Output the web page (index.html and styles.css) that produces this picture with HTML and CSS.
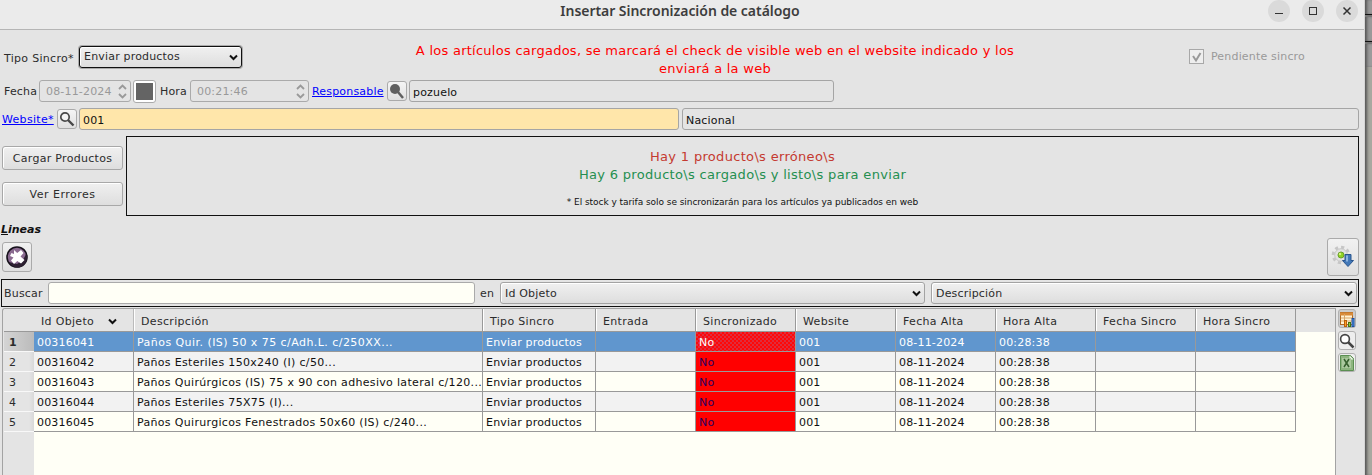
FILE: index.html
```html
<!DOCTYPE html>
<html lang="es">
<head>
<meta charset="utf-8">
<title>Insertar Sincronización de catálogo</title>
<link rel="stylesheet" href="styles.css">
</head>
<body>
<div class="window">
  <header class="titlebar">
    <h1 class="title">Insertar Sincronización de catálogo</h1>
    <div class="win-buttons">
      <span class="win-btn"><svg width="22" height="22"><path d="M7 13.5h8" stroke="#333"/></svg></span>
      <span class="win-btn"><svg width="22" height="22"><rect x="7.5" y="7.5" width="7" height="7" fill="none" stroke="#333"/></svg></span>
      <span class="win-btn"><svg width="22" height="22"><path d="M7.5 7.5l7 7M14.500 7.500l-7 7" stroke="#333" stroke-width="1.500"/></svg></span>
    </div>
  </header>

  <section class="row row-type">
    <label class="label type-label">Tipo Sincro*</label>
    <div class="combo combo-focus"><span>Enviar productos</span><svg class="chev" width="9" height="7"><path d="M1 1.500L4.500 5L8 1.500" fill="none" stroke="#111" stroke-width="2"/></svg></div>
    <p class="notice">A los artículos cargados, se marcará el check de visible web en el website indicado y los<br>enviará a la web</p>
    <div class="check"><span class="check-box"><svg width="13" height="13"><path d="M3 6l3 4.500L10.500 3" fill="none" stroke="#999" stroke-width="2"/></svg></span><span class="check-text">Pendiente sincro</span></div>
  </section>

  <section class="row row-date">
    <label class="label date-label">Fecha</label>
    <div class="spin spin-date"><span>08-11-2024</span><svg width="9" height="15"><path d="M1 5L4.500 1.500L8 5M1 10l3.500 3.500L8 10" fill="none" stroke="#999" stroke-width="1.800"/></svg></div>
    <span class="square-btn"><i class="square"></i></span>
    <label class="label hour-label">Hora</label>
    <div class="spin spin-hour"><span>00:21:46</span><svg width="9" height="15"><path d="M1 5L4.500 1.500L8 5M1 10l3.500 3.500L8 10" fill="none" stroke="#999" stroke-width="1.800"/></svg></div>
    <a class="link resp-link">Responsable</a>
    <span class="tool-btn"><svg width="18" height="18"><circle cx="7" cy="7" r="5" fill="#606060"/><path d="M10 10l5 6" stroke="#606060" stroke-width="2.500"/></svg></span>
    <div class="field resp-field">pozuelo</div>
  </section>

  <section class="row row-site">
    <a class="link site-link">Website*</a>
    <span class="tool-btn"><svg width="18" height="18"><circle cx="7" cy="7" r="4.200" fill="#f4f4f4" stroke="#484848" stroke-width="1.700"/><path d="M10 10l5.500 5.500" stroke="#484848" stroke-width="2.400"/></svg></span>
    <div class="field field-required">001</div>
    <div class="field site-name">Nacional</div>
  </section>

  <section class="status">
    <div class="actions">
      <button class="btn">Cargar Productos</button>
      <button class="btn">Ver Errores</button>
    </div>
    <div class="messages">
      <p class="msg msg-error">Hay 1 producto\s erróneo\s</p>
      <p class="msg msg-ok">Hay 6 producto\s cargado\s y listo\s para enviar</p>
      <p class="msg-note">* El stock y tarifa solo se sincronizarán para los artículos ya publicados en web</p>
    </div>
  </section>

  <section class="lines-head">
    <div class="lines-left">
      <h2 class="lines-title"><u>L</u>ineas</h2>
      <span class="icon-btn"><svg width="22" height="22" viewBox="0 0 22 22"><circle cx="11" cy="11" r="10" fill="#8a6a90" stroke="#15101a" stroke-width="1.600"/><path d="M3 16A9 9 0 0 0 20 8L17 14L11 18z" fill="#2d2032"/><path d="M8 4l3.200 3L15 4l2.500 3-3 3.500 4 3.500-3.500 3.500-3.700-2.500L8 18l-3-3.500 2.500-3L4 10l1.500-3L8 8z" fill="#fff"/></svg></span>
    </div>
    <span class="gear-btn"><svg width="24" height="24" viewBox="0 0 24 24">
      <circle cx="10" cy="10" r="7.800" fill="none" stroke="#c6c6c6" stroke-width="3" stroke-dasharray="3.100 3"/>
      <circle cx="10" cy="10" r="6.300" fill="#e2e2e2" stroke="#c6c6c6"/>
      <circle cx="10" cy="10" r="3" fill="#8ed321" stroke="#6a9e2d"/><circle cx="9" cy="9" r="1.200" fill="#d4f57c"/>
      <path d="M14 9.500h6v6h2.500l-5.500 6-5.500-6h2.500z" fill="#4278b8" stroke="#2b568e"/><path d="M15 10.500h2v6h-2z" fill="#8bb3df"/></svg></span>
  </section>

  <section class="search">
    <label class="label search-label">Buscar</label>
    <div class="search-input"></div>
    <span class="search-in">en</span>
    <div class="combo"><span>Id Objeto</span><svg class="chev" width="9" height="7"><path d="M1 1.500L4.500 5L8 1.500" fill="none" stroke="#111" stroke-width="2"/></svg></div>
    <div class="combo combo-desc"><span>Descripción</span><svg class="chev" width="9" height="7"><path d="M1 1.500L4.500 5L8 1.500" fill="none" stroke="#111" stroke-width="2"/></svg></div>
  </section>

  <section class="grid-area">
    <div class="table-frame">
      <table class="table">
        <colgroup><col class="c-num"><col class="c-id"><col class="c-desc"><col class="c-type"><col class="c-std"><col class="c-std"><col class="c-std"><col class="c-std"><col class="c-std"><col class="c-std"><col class="c-std"><col class="c-rest"></colgroup>
        <thead><tr><th></th><th class="sorted"><span class="sort-cell">Id Objeto<svg width="9" height="7"><path d="M1 1.500L4.500 5L8 1.500" fill="none" stroke="#111" stroke-width="2"/></svg></span></th><th>Descripción</th><th>Tipo Sincro</th><th>Entrada</th><th>Sincronizado</th><th>Website</th><th>Fecha Alta</th><th>Hora Alta</th><th>Fecha Sincro</th><th>Hora Sincro</th><th class="rest"></th></tr></thead>
        <tbody>
          <tr class="selected"><th>1</th><td>00316041</td><td class="desc desc-wide">Paños Quir. (IS) 50 x 75 c/Adh.L. c/250XX...</td><td>Enviar productos</td><td></td><td class="no">No</td><td>001</td><td>08-11-2024</td><td>00:28:38</td><td></td><td></td><td class="rest"></td></tr>
          <tr class="alt"><th>2</th><td>00316042</td><td class="desc">Paños Esteriles 150x240 (I) c/50...</td><td>Enviar productos</td><td></td><td class="no">No</td><td>001</td><td>08-11-2024</td><td>00:28:38</td><td></td><td></td><td class="rest"></td></tr>
          <tr><th>3</th><td>00316043</td><td class="desc">Paños Quirúrgicos (IS) 75 x 90 con adhesivo lateral c/120...</td><td>Enviar productos</td><td></td><td class="no">No</td><td>001</td><td>08-11-2024</td><td>00:28:38</td><td></td><td></td><td class="rest"></td></tr>
          <tr class="alt"><th>4</th><td>00316044</td><td class="desc">Paños Esteriles 75X75 (I)...</td><td>Enviar productos</td><td></td><td class="no">No</td><td>001</td><td>08-11-2024</td><td>00:28:38</td><td></td><td></td><td class="rest"></td></tr>
          <tr><th>5</th><td>00316045</td><td class="desc">Paños Quirurgicos Fenestrados 50x60 (IS) c/240...</td><td>Enviar productos</td><td></td><td class="no">No</td><td>001</td><td>08-11-2024</td><td>00:28:38</td><td></td><td></td><td class="rest"></td></tr>
        </tbody>
      </table>
      <div class="table-empty"></div>
    </div>
    <div class="side-tools">
      <span class="side-btn pressed"><svg width="16" height="16"><rect x="1.500" y="1.500" width="12" height="12" fill="#fff2d4" stroke="#ad6827"/><path d="M1 3h13" stroke="#d88a38" stroke-width="3"/><path d="M2 7h11M2 10h11M5.500 3v10" stroke="#d8a466"/><rect x="5.500" y="9.500" width="2" height="6" fill="#ff9b26" stroke="#b85f0c"/><rect x="9.500" y="11.500" width="2" height="4" fill="#8bc53e" stroke="#427514"/><rect x="13" y="7.500" width="2" height="8" fill="#4d91de" stroke="#1e4f9c"/></svg></span>
      <span class="side-btn"><svg width="16" height="16"><circle cx="6" cy="6" r="4.400" fill="#fff" stroke="#444" stroke-width="1.600"/><path d="M9 9l5.500 5.500" stroke="#444" stroke-width="2.500"/></svg></span>
      <span class="side-btn"><svg width="16" height="16"><path d="M1.500.500h10l3 3v12h-13z" fill="#8db57f" stroke="#5b8f52"/><path d="M10.500.500l4 4h-4z" fill="#eef6e9"/><path d="M3 3h9v10H3z" fill="#abc99e"/><path d="M5 4l5 8M10 4l-5 8" stroke="#37612e" stroke-width="1.500"/></svg></span>
    </div>
  </section>
</div>
<aside class="backdrop"><i class="strip strip-a"></i><i class="strip strip-b"></i><i class="strip strip-c"></i></aside>
</body>
</html>
```
FILE: styles.css
```css
* { box-sizing: border-box; }
body {
  margin: 0; width: 1372px; height: 475px; overflow: hidden; display: flex;
  font: 11px/14px "DejaVu Sans", sans-serif; letter-spacing: .18px;
  color: #2c2c2c; background: #e4e4e4;
}
h1, h2, p { margin: 0; font-weight: normal; }
svg { display: block; flex: none; }
.window { width: 1365px; height: 475px; display: flex; flex-direction: column; background: #e4e4e4; border-right: 1px solid #d5d5d5; }
.backdrop { width: 7px; background: #a8a8a0; display: flex; flex-direction: column; box-shadow: inset 3px 0 3px -1px #555; }
.strip { display: block; background: #999; border-bottom: 1px solid #111; box-shadow: inset 3px 0 3px -1px #555; }
.strip-a { height: 15px; }
.strip-b { height: 27px; border-top: 2px solid #777; }
.strip-c { height: 25px; border-top: 2px solid #777; border-bottom: 0; background: #9b9b9b; }

.titlebar { height: 30px; flex: none; display: grid; grid-template-columns: 1fr auto 1fr; background: #ebebeb; border-bottom: 1px solid #b5b5b5; }
.title { grid-column: 2; margin-left: -4px; font: 600 14px/22px "Noto Sans", sans-serif; letter-spacing: -.04px; color: #3d3d3d; }
.win-buttons { display: flex; justify-content: flex-end; gap: 12px; padding-right: 6px; }
.win-btn { width: 22px; height: 22px; border-radius: 50%; background: #dadada; }

.row { flex: none; display: flex; align-items: center; }
.label { flex: none; }
.row-type { height: 46px; padding: 12px 60px 0 4px; align-items: flex-start; }
.type-label { width: 75px; padding-top: 10px; letter-spacing: .3px; }
.combo {
  height: 22px; flex: 1; display: flex; align-items: center; justify-content: space-between;
  padding: 1px 4px 0; border: 1px solid #a3a3a3; border-radius: 3px;
  background: linear-gradient(#f0f0f0, #dedede); box-shadow: inset 1px 1px #fff;
}
.combo-focus { flex: none; width: 163px; height: 22px; margin-top: 4px; border-color: #111; box-shadow: 0 0 0 1px #aaa, inset 1px 1px #fff; padding: 0 3px 0 4px; }
.notice { width: 600px; margin-left: 173px; color: #f00; font-size: 13px; line-height: 18px; letter-spacing: .26px; text-align: center; white-space: nowrap; }
.check { display: flex; align-items: center; gap: 7px; margin: 0 -1px 0 auto; color: #999; padding-top: 7px; }
.check-box { width: 15px; height: 15px; border: 1px solid #a8a8a8; background: #eee; }
.check-text { padding-top: 1px; }

.row-date { height: 30px; padding-left: 4px; }
.date-label { width: 35px; padding-top: 2px; }
.spin { height: 22px; border: 1px solid #aaa; border-radius: 3px; display: flex; align-items: center; justify-content: space-between; padding: 0 3px 0 6px; color: #999; }
.spin span { padding-top: 2px; }
.spin-date { width: 92px; }
.spin-hour { width: 119px; }
.square-btn { width: 23px; height: 23px; margin-left: 2px; padding: 2px; border: 1px solid #aaa; border-radius: 3px; background: #fff; }
.square { display: block; width: 17px; height: 17px; background: #646464; }
.hour-label { width: 30px; margin-left: 4px; padding-top: 2px; }
.link { color: #00f; text-decoration: underline; flex: none; padding-top: 2px; }
.resp-link { width: 72px; margin: 0 3px; }
.tool-btn { width: 20px; height: 20px; border: 1px solid #aaa; border-radius: 3px; background: linear-gradient(#f5f5f5, #e0e0e0); flex: none; }
.field { height: 22px; border: 1px solid #a5a5a5; border-radius: 3px; padding: 4px 3px 0; line-height: 14px; color: #111; }
.resp-field { width: 425px; margin-left: 2px; padding-top: 5px; }
.row-site { height: 26px; padding: 0 5px 0 2px; }
.site-link { width: 55px; letter-spacing: .3px; }
.field-required { width: 600px; margin: 0 3px 0 2px; padding-top: 5px; background: #ffe6aa; }
.site-name { flex: 1; padding-top: 5px; }

.status { height: 80px; flex: none; display: flex; margin-top: 4px; padding: 0 5px 0 2px; }
.actions { width: 121px; display: flex; flex-direction: column; gap: 12px; padding-top: 10px; margin-right: 3px; }
.btn { height: 24px; padding: 1px 0 0; font: inherit; letter-spacing: .3px; color: inherit; border: 1px solid #a8a8a8; border-radius: 3px; background: linear-gradient(#f0f0f0, #dedede); box-shadow: inset 1px 1px #fff; }
.btn + .btn { letter-spacing: .5px; }
.messages { flex: 1; border: 1px solid #111; text-align: center; padding-top: 11px; }
.msg { font-size: 13px; line-height: 18px; letter-spacing: .32px; }
.msg-error { color: #c43a30; }
.msg-ok { color: #258f50; }
.msg-note { font-size: 9px; line-height: 12px; margin-top: 12px; letter-spacing: -.05px; color: #111; }

.lines-head { height: 63px; flex: none; display: flex; justify-content: space-between; padding: 7px 5px 0 1px; }
.lines-title { font: italic bold 11px/14px "DejaVu Sans", sans-serif; letter-spacing: 0; color: #111; }
.icon-btn { width: 30px; height: 30px; margin: 5px 0 0 1px; padding: 3px; display: block; border: 1px solid #aaa; border-radius: 3px; background: linear-gradient(#f1f1f1, #dfdfdf); }
.gear-btn { width: 32px; height: 38px; margin-top: 15px; padding: 6px 3px; border: 1px solid #aaa; border-radius: 3px; background: linear-gradient(#f1f1f1, #dfdfdf); }

.search { height: 28px; flex: none; display: flex; align-items: center; margin: 0 5px 0 1px; padding: 0 1px 0 2px; border: 1px solid #111; }
.search-label { width: 44px; padding-top: 1px; }
.search-input { width: 427px; height: 22px; border: 1px solid #aaa; border-radius: 3px; background: #fffff6; }
.search-in { width: 25px; padding: 1px 0 0 5px; }
.search .combo { flex: none; width: 425px; padding-right: 3px; }
.search .combo-desc { width: auto; flex: 1; margin-left: 6px; }

.grid-area { flex: 1; display: flex; min-height: 0; margin: 1px 0 0 2px; }
.table-frame { width: 1334px; display: flex; flex-direction: column; border: 1px solid #a3a3a3; border-bottom: 0; border-radius: 3px 0 0; padding: 0 0 0 1px; }
.table { width: 1331px; table-layout: fixed; border-collapse: separate; border-spacing: 0; flex: none; }
.c-num { width: 30px; } .c-id { width: 100px; } .c-desc { width: 349px; } .c-type { width: 113px; } .c-std { width: 100px; }
.table th, .table td { font-weight: normal; text-align: left; white-space: nowrap; overflow: hidden; padding: 2px 0 0 3px; }
.table thead th { height: 23px; padding: 3px 0 0 7px; letter-spacing: .32px; border-right: 1px solid #999; border-bottom: 1px solid #999; box-shadow: inset 1px 0 #fff; background: #e4e4e4; }
.table thead th:first-child { border-right: 0; box-shadow: none; }
.table thead .sorted { box-shadow: none; border-right-color: #bbb; }
.table thead .rest { border: 0; box-shadow: none; }
.sort-cell { display: flex; align-items: center; gap: 14px; }
.table td { height: 20px; border-right: 1px solid #999; border-bottom: 1px solid #999; color: #111; background: #fffff6; }
.table .desc { letter-spacing: .32px; }
.table .desc-wide { letter-spacing: .45px; }
.table tbody th { padding-left: 5px; background: linear-gradient(90deg, #e4e4e4 25px, #d8d8d8); border-bottom: 1px solid #f8f8f8; }
.table .alt td { background: #f2f2f2; }
.table .selected th { font-weight: bold; background: linear-gradient(90deg, #d4d4d4, #bbb); }
.table .selected td { background: #6096ce; color: #fff; }
.table tr:not(.selected) td.no { background: #f00; color: #2c0060; }
.table .selected td.no {
  background: repeating-linear-gradient(90deg, #ff0000 0 1px, rgba(96, 150, 206, .35) 1px 2px), #f00;
  background: repeating-conic-gradient(#ff0808 0 25%, #e02c3c 0 50%) 0 0 / 4px 4px;
}
.table td.rest, .table .alt td.rest, .table .selected td.rest { background: #fffff6; border: 0; }
.table-empty { flex: 1; margin-left: 30px; background: #fffff6; }
.side-tools { display: flex; flex-direction: column; gap: 3px; padding: 1px 0 0 2px; }
.side-btn { width: 18px; height: 19px; border: 1px solid #b0b0b0; border-radius: 3px; background: #eee; padding: 1px 0; }
.pressed { background: #ccc; }
```
